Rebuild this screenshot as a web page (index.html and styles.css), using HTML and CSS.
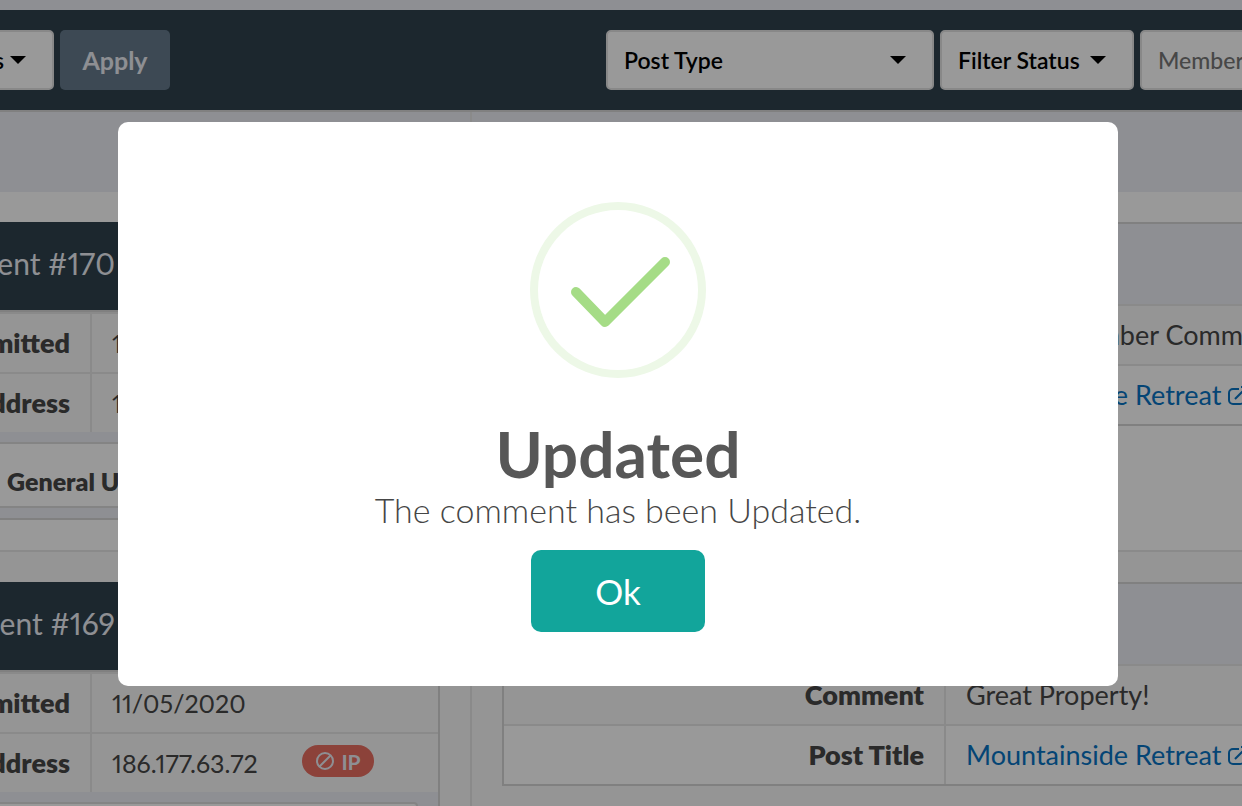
FILE: index.html
```html
<!DOCTYPE html>
<html lang="en">
<head>
<meta charset="utf-8">
<title>Comments</title>
<link rel="stylesheet" href="styles.css">
</head>
<body>
<div class="page">
  <form class="toolbar">
    <div class="group group-left">
      <label class="picker picker-bulk">
        <select aria-label="Bulk actions"><option>Bulk Actions</option></select>
        <svg class="caret" viewBox="0 0 16 8"><path d="M0 0h16L8 8z"/></svg>
      </label>
      <button type="button" class="apply">Apply</button>
    </div>
    <div class="group">
      <label class="picker picker-type">
        <select aria-label="Post type"><option>Post Type</option></select>
        <svg class="caret" viewBox="0 0 16 8"><path d="M0 0h16L8 8z"/></svg>
      </label>
      <label class="picker picker-status">
        <select aria-label="Filter status"><option>Filter Status</option></select>
        <svg class="caret" viewBox="0 0 16 8"><path d="M0 0h16L8 8z"/></svg>
      </label>
      <input class="member" type="text" placeholder="Member ID" aria-label="Member ID">
    </div>
  </form>

  <div class="grid">
    <div class="col-head"></div>
    <div class="col-head"></div>

    <div class="cell">
      <section class="card">
        <h2 class="card-title"><span>Comment #170</span></h2>
        <table class="facts facts-log">
          <tr><th scope="row">Submitted</th><td>11/05/2020</td></tr>
          <tr><th scope="row">IP Address</th><td>186.177.63.72</td></tr>
        </table>
        <div class="kind">General U</div>
      </section>
    </div>
    <div class="cell">
      <section class="card card-post">
        <div class="post-head"></div>
        <table class="facts facts-post">
          <tr><th scope="row">Comment</th><td>Sample Member Comment</td></tr>
          <tr><th scope="row">Post Title</th><td><a href="#">Mountainside Retreat<svg class="ext" viewBox="0 0 22 22"><path d="M12 4H6a4 4 0 0 0-4 4v7a4 4 0 0 0 4 4h7a4 4 0 0 0 4-4v-3M8 14L20 2M14 2h6v6"/></svg></a></td></tr>
        </table>
      </section>
    </div>

    <div class="cell cell-alt">
      <section class="card">
        <h2 class="card-title"><span>Comment #169</span></h2>
        <table class="facts facts-log">
          <tr><th scope="row">Submitted</th><td>11/05/2020</td></tr>
          <tr><th scope="row">IP Address</th><td><div class="ip"><span>186.177.63.72</span>
            <button type="button" class="ban"><svg viewBox="0 0 20 20"><circle cx="10" cy="10" r="8"/><path d="M4.500 15.500l11-11"/></svg>IP</button></div></td></tr>
        </table>
        <div class="kind">General U</div>
      </section>
    </div>
    <div class="cell cell-alt">
      <section class="card card-post">
        <div class="post-head"></div>
        <table class="facts facts-post">
          <tr><th scope="row">Comment</th><td>Great Property!</td></tr>
          <tr><th scope="row">Post Title</th><td><a href="#">Mountainside Retreat<svg class="ext" viewBox="0 0 22 22"><path d="M12 4H6a4 4 0 0 0-4 4v7a4 4 0 0 0 4 4h7a4 4 0 0 0 4-4v-3M8 14L20 2M14 2h6v6"/></svg></a></td></tr>
        </table>
      </section>
    </div>
  </div>
</div>

<div class="overlay">
  <div class="modal" role="dialog" aria-modal="true" aria-labelledby="modal-title">
    <svg class="success" viewBox="0 0 176 176">
      <circle cx="88" cy="88" r="84"/>
      <path d="M46 90l29 30 60-60"/>
    </svg>
    <h1 class="modal-title" id="modal-title">Updated</h1>
    <p class="modal-text">The comment has been Updated.</p>
    <button type="button" class="ok">Ok</button>
  </div>
</div>
</body>
</html>
```
FILE: styles.css
```css
* { box-sizing: border-box; }

body {
  margin: 0;
  height: 100vh;
  overflow: hidden;
  background: #edeff5;
  color: #464646;
  font-family: Lato, "Open Sans", sans-serif;
  font-size: 27px;
  font-variant-numeric: proportional-nums;
}

button, input, select { font-family: inherit; }

/* The list is wider than the window and scrolled sideways */
.page {
  margin-left: -170px;
  margin-right: -200px;
  padding-top: 10px;
}

.toolbar {
  display: flex;
  justify-content: space-between;
  height: 100px;
  padding: 20px 0;
  background: #2f414e;
}

.group { display: flex; gap: 6px; }
.group-left { padding-left: 10px; }

.picker { position: relative; display: block; }
.picker-bulk { width: 214px; }
.picker-type { width: 328px; }
.picker-status { width: 194px; }

.picker select,
.member {
  width: 100%;
  height: 60px;
  padding: 0 16px;
  border: 2px solid #e3e3e3;
  border-radius: 5px;
  background: #fff;
  color: #000;
  font-size: 23px;
  font-weight: 600;
  appearance: none;
}
.picker-bulk select { padding-right: 48px; text-align-last: right; }

.member { width: 302px; font-weight: 500; }
.member::placeholder { color: #777; }

.caret {
  position: absolute;
  top: 26px;
  right: 28px;
  width: 16px;
  height: 8px;
  pointer-events: none;
}

.apply {
  width: 110px;
  height: 60px;
  padding: 0;
  border: 0;
  border-radius: 5px;
  background: #667b8d;
  color: #edeff5;
  font-size: 25px;
  font-weight: 700;
}

.grid {
  display: grid;
  grid-template-columns: 642px 1fr;
  border-top: 2px solid #d6d6d6;
}

.col-head { height: 80px; }
.col-head:nth-child(odd), .cell:nth-child(odd) { border-right: 2px solid #e6e6e6; }

.cell {
  height: 360px;
  padding: 30px;
  border-bottom: 2px solid #e6e6e6;
  background: #fff;
}
.cell-alt { background: #f8f8f8; }

.card {
  border: 2px solid #d6d6d6;
  border-top: 0;
  background: #edeff5;
}

.card-title {
  display: flex;
  align-items: center;
  height: 88px;
  margin: 0 -2px;
  padding-bottom: 6px;
  background: #2f414e;
  color: #edeff5;
  font-size: 30px;
  font-weight: 400;
}
.card-title span { width: 255px; text-align: right; }

.facts {
  width: 100%;
  border-collapse: separate;
  border-spacing: 0;
  table-layout: fixed;
  background: #f8f8f8;
}
.facts th, .facts td {
  height: 60px;
  padding: 0 20px;
  border-top: 2px solid #e6e6e6;
  line-height: 32px;
}
.card-title + .facts { border-top: 2px solid #d6d6d6; }
.facts th {
  width: 230px;
  border-right: 2px solid #e6e6e6;
  text-align: right;
  font-weight: 800;
}
.facts td { text-align: left; white-space: nowrap; }
.facts-log td { font-size: 25px; }

.ip { display: grid; grid-template-columns: 190px auto; align-items: center; }

.ban {
  display: flex;
  align-items: center;
  justify-content: center;
  gap: 6px;
  width: 72px;
  height: 32px;
  margin-bottom: 4px;
  padding: 0;
  border: 0;
  border-radius: 16px;
  background: #e96e62;
  color: #edeff5;
  font-size: 21px;
  font-weight: 700;
}
.ban svg { width: 20px; height: 20px; fill: none; stroke: currentColor; stroke-width: 2; }

.kind {
  height: 66px;
  margin: 10px 20px 10px;
  padding: 12px 123px 0;
  border: 2px solid #dcdcdc;
  border-radius: 4px;
  background: #fff;
  font-size: 25px;
  font-weight: 800;
  line-height: 50px;
  white-space: nowrap;
}

.card-post { border-top: 2px solid #d6d6d6; }
.post-head { height: 80px; }
.facts-post th { width: 442px; }
.facts-post tr:nth-child(even) { background: #fff; }

a { color: #0773c3; text-decoration: none; }
.ext { width: 22px; height: 22px; margin-left: 6px; fill: none; stroke: currentColor; stroke-width: 2; vertical-align: -2px; }

.overlay {
  position: fixed;
  inset: 0;
  display: flex;
  align-items: center;
  justify-content: center;
  padding: 2px 6px 0 0;
  background: rgba(0, 0, 0, 0.4);
}

.modal {
  display: flex;
  flex-direction: column;
  align-items: center;
  width: 1000px;
  max-width: 90vw;
  padding: 80px 40px 54px;
  border-radius: 10px;
  background: #fff;
}

.success { width: 176px; height: 176px; fill: none; }
.success circle { stroke: #edf8e7; stroke-width: 8; }
.success path { stroke: #a5dc86; stroke-width: 10; stroke-linecap: round; stroke-linejoin: round; }

.modal-title {
  margin: 40px 0 0;
  color: #575757;
  font-size: 64px;
  font-weight: 700;
  line-height: 72px;
}

.modal-text {
  margin: 0 0 20px;
  font-size: 34px;
  font-weight: 300;
  line-height: 40px;
}

.ok {
  width: 174px;
  height: 82px;
  border: 0;
  border-radius: 10px;
  background: #12a59b;
  color: #fff;
  font-size: 35px;
}
```
